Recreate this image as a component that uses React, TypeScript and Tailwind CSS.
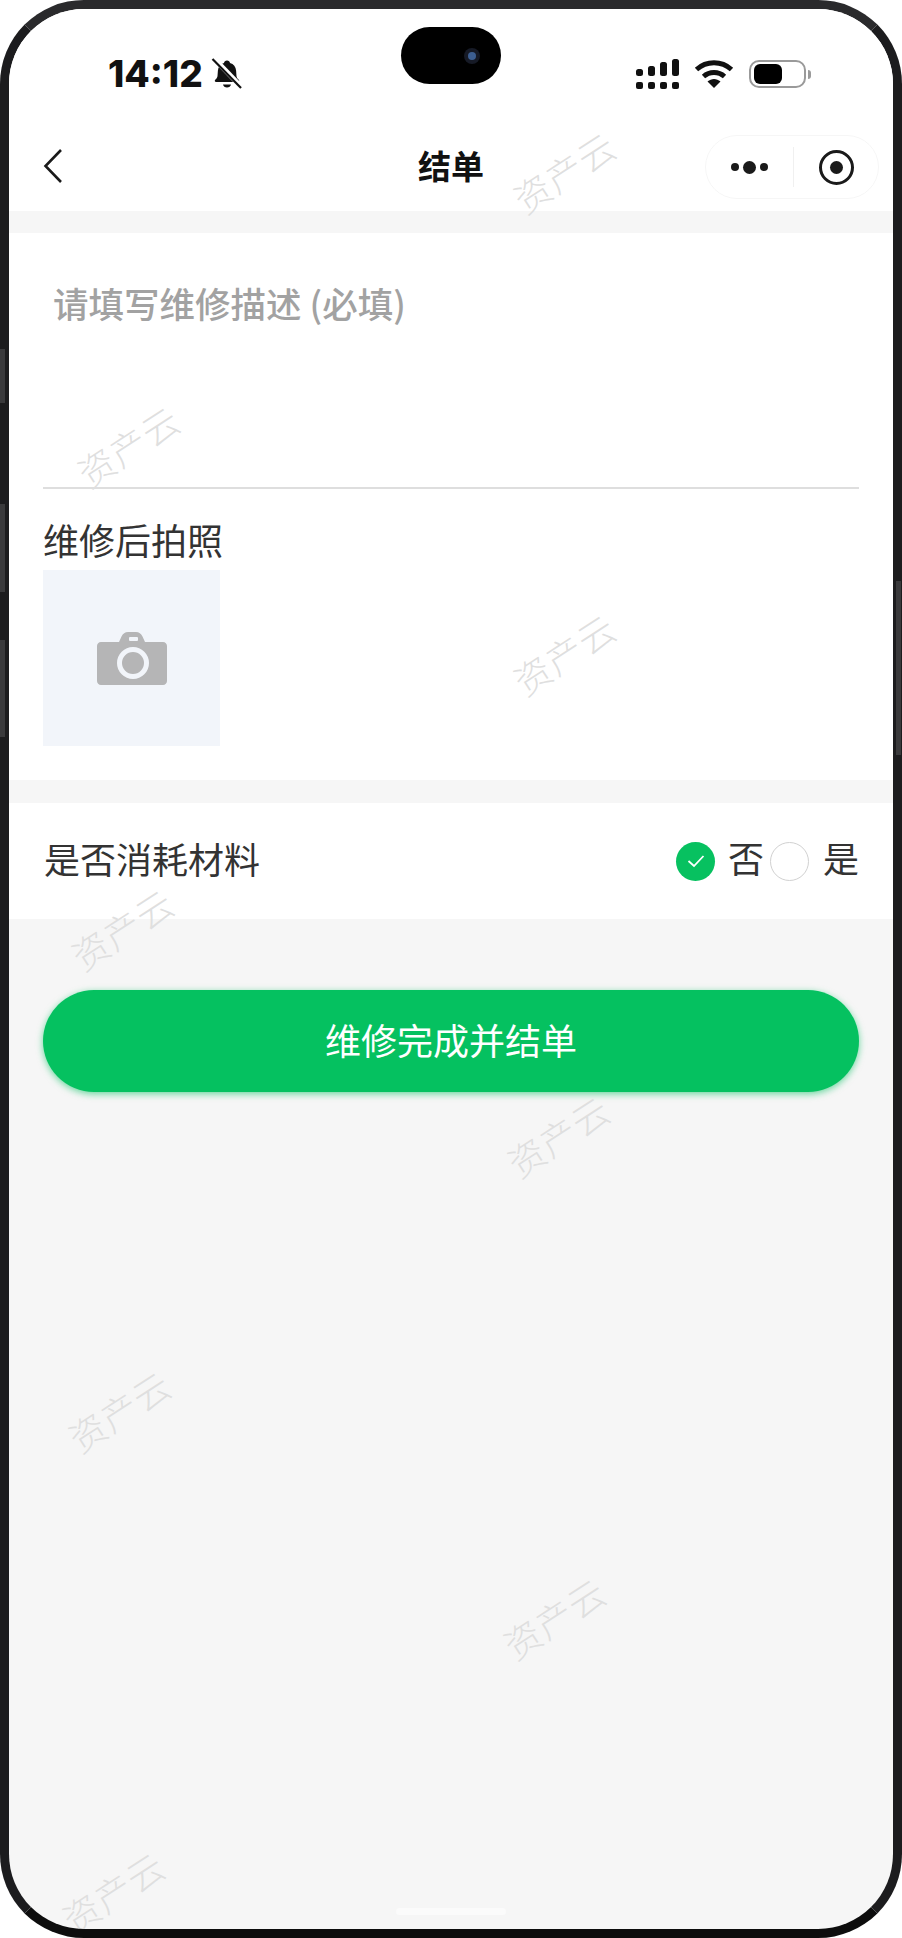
const CJK = "font-['PingFang_SC','Noto_Sans_CJK_SC','Noto_Sans',sans-serif]";

const WATERMARKS = [
  "left-[499px] top-[141px]",
  "left-[63px] top-[415px]",
  "left-[499px] top-[623px]",
  "left-[57px] top-[898px]",
  "left-[493px] top-[1105px]",
  "left-[54px] top-[1380px]",
  "left-[489px] top-[1587px]",
  "left-[48px] top-[1861px]",
];

function BellOff() {
  return (
    <svg width="32" height="32" viewBox="0 0 32 32" className="ml-[8px]">
      <path
        d="M16 2.500c1.700 0 2.800 1 3 2.400 3.700 1 5.800 4 6.100 7.600l.4 5.500c.1 1.600 1 2.700 2.300 3.800.8.800.4 2.200-.9 2.200H5.100c-1.300 0-1.700-1.400-.9-2.200 1.300-1.100 2.200-2.200 2.300-3.800l.4-5.500c.3-3.600 2.400-6.600 6.100-7.600.2-1.400 1.300-2.400 3-2.400z"
        fill="#111"
      />
      <path d="M12 26.500h8c-.4 1.800-2 3-4 3s-3.600-1.200-4-3z" fill="#111" />
      <path d="M3.500 1 30.500 29" stroke="#fff" strokeWidth="5" />
      <path d="M1.500 1 30 30" stroke="#111" strokeWidth="2.200" />
    </svg>
  );
}

function Signal() {
  return (
    <svg width="46" height="32" viewBox="0 0 46 32">
      <rect x="1" y="11" width="7" height="7" rx="2.500" fill="#111" />
      <rect x="13" y="8" width="7" height="10" rx="2.500" fill="#111" />
      <rect x="25" y="4" width="7" height="14" rx="2.500" fill="#111" />
      <rect x="37" y="1" width="7" height="17" rx="2.500" fill="#111" />
      <rect x="1" y="24" width="7" height="7" rx="2" fill="#111" />
      <rect x="13" y="24" width="7" height="7" rx="2" fill="#111" />
      <rect x="25" y="24" width="7" height="7" rx="2" fill="#111" />
      <rect x="37" y="24" width="7" height="7" rx="2" fill="#111" />
    </svg>
  );
}

function Wifi() {
  return (
    <svg width="40" height="30" viewBox="0 0 40 30">
      <path d="M2.500 10.500C12.500 1.500 27.500 1.500 37.500 10.500" fill="none" stroke="#111" strokeWidth="5" />
      <path d="M9.500 17.500C15.500 12.200 24.500 12.200 30.500 17.500" fill="none" stroke="#111" strokeWidth="5" />
      <path d="M13.500 22.500C17.500 19 22.500 19 26.500 22.500L20 29z" fill="#111" />
    </svg>
  );
}

function Battery() {
  return (
    <div className="ml-[15px] flex items-center">
      <div className="flex h-[28px] w-[57px] items-center rounded-[10px] border-2 border-[#9a9a9a] px-[3px]">
        <div className="h-[20px] w-[28px] rounded-[6px] bg-black" />
      </div>
      <div className="ml-[2px] h-[9px] w-[3px] rounded-r-full bg-[#9a9a9a]" />
    </div>
  );
}

function Camera() {
  return (
    <svg width="70" height="53" viewBox="0 0 70 53">
      <path
        d="M4 10h18l2.500-5.500C26 1.500 28 0 31 0h8c3 0 5 1.500 6.500 4.500L48 10h18c2.300 0 4 1.700 4 4v35c0 2.300-1.700 4-4 4H4c-2.300 0-4-1.700-4-4V14c0-2.300 1.700-4 4-4z"
        fill="#b5b5b6"
      />
      <rect x="32" y="5" width="9" height="4" rx="1" fill="#f2f5fa" />
      <circle cx="36" cy="31" r="13.500" fill="none" stroke="#f2f5fa" strokeWidth="5" />
    </svg>
  );
}

export default function App() {
  return (
    <div className={`relative h-[1938px] w-[902px] overflow-hidden bg-white ${CJK}`}>
      {/* side buttons */}
      <div className="absolute left-0 top-[349px] z-20 h-[54px] w-[5px] bg-[#3a3a3c]" />
      <div className="absolute left-0 top-[504px] z-20 h-[88px] w-[5px] bg-[#3a3a3c]" />
      <div className="absolute left-0 top-[640px] z-20 h-[97px] w-[5px] bg-[#3a3a3c]" />
      <div className="absolute left-[896px] top-[581px] z-20 h-[174px] w-[5px] bg-[#3a3a3c]" />

      <div className="relative h-full overflow-hidden rounded-[84px] border-[9px] border-[#1c1c1e] border-t-[#2a2a2c] border-b-[#0d0d0d] bg-[#f6f6f6]">
        {/* header */}
        <div className="h-[202px] bg-white">
          <div className="relative flex h-[103px] items-start">
            <div className="ml-[99px] mt-[45px] flex items-center">
              <span className="font-['Inter',sans-serif] text-[37px] font-extrabold leading-[40px] text-[#111]">14:12</span>
              <BellOff />
            </div>
            <div className="absolute left-[392px] top-[18px] flex h-[57px] w-[100px] items-center justify-end rounded-full bg-black pr-[21px]">
              <div className="flex h-[16px] w-[16px] items-center justify-center rounded-full bg-[#161a26]">
                <div className="h-[8px] w-[8px] rounded-full bg-[#3d5f92]" />
              </div>
            </div>
            <div className="ml-auto mr-[82px] mt-[49px] flex items-center">
              <Signal />
              <div className="ml-[13px]">
                <Wifi />
              </div>
              <Battery />
            </div>
          </div>

          <div className="relative flex h-[99px] items-start">
            <svg width="20" height="36" viewBox="0 0 20 36" className="ml-[34px] mt-[36px]">
              <path d="M18 2 2.500 18 18 34" fill="none" stroke="#1a1a1a" strokeWidth="2.600" />
            </svg>
            <span className="absolute left-[409px] top-[31px] w-[66px] whitespace-nowrap text-center text-[33px] font-bold leading-[44px] text-[#111]">
              结单
            </span>
            <div className="ml-auto mr-[14px] mt-[23px] flex h-[64px] w-[174px] items-center rounded-full border border-[#f6f6f6]">
              <div className="ml-[25px] flex items-center gap-[4px]">
                <div className="h-[8px] w-[8px] rounded-full bg-[#1a1a1a]" />
                <div className="h-[13px] w-[13px] rounded-full bg-[#1a1a1a]" />
                <div className="h-[8px] w-[8px] rounded-full bg-[#1a1a1a]" />
              </div>
              <div className="ml-[25px] h-[40px] w-px bg-[#f0f0f0]" />
              <div className="ml-[25px] flex h-[35px] w-[35px] items-center justify-center rounded-full border-[3.5px] border-[#1a1a1a]">
                <div className="h-[13px] w-[13px] rounded-full bg-[#1a1a1a]" />
              </div>
            </div>
          </div>
        </div>

        {/* repair description + photo */}
        <div className="mt-[22px] bg-white px-[34px] pb-[34px]">
          <div className="h-[256px] border-b-2 border-[#dedede] pl-[10px] pt-[48px]">
            <span className="text-[35.500px] font-medium leading-[44px] text-[#a2a2a2]">请填写维修描述 (必填)</span>
          </div>
          <div className="mt-[27px] text-[36px] leading-[46px] text-[#333]">维修后拍照</div>
          <div className="mt-[8px] flex h-[176px] w-[177px] items-center justify-center bg-[#f2f5fa]">
            <Camera />
          </div>
        </div>

        {/* material option */}
        <div className="mt-[23px] flex h-[116px] items-center justify-between bg-white pl-[35px] pr-[37px] text-[36px] leading-[46px] text-[#333]">
          <span className="relative -top-[3px]">是否消耗材料</span>
          <div className="flex items-center">
            <div className="flex h-[39px] w-[39px] items-center justify-center rounded-full bg-[#07c160]">
              <svg width="20" height="16" viewBox="0 0 20 16">
                <path d="M2.500 8 8 13 17.500 3" fill="none" stroke="#fff" strokeWidth="1.800" />
              </svg>
            </div>
            <span className="relative -top-[4px] ml-[13px] w-[36px]">否</span>
            <div className="ml-[6px] h-[39px] w-[39px] rounded-full border-[1.500px] border-[#d1d1d1]" />
            <span className="relative -top-[4px] ml-[14px] w-[33px]">是</span>
          </div>
        </div>

        <div className="mx-[34px] mt-[71px] flex h-[102px] items-center justify-center rounded-full bg-[#05c160] text-[36px] text-white shadow-[0_2px_7px_rgba(7,193,96,0.6)]">
          <span className="relative -top-[2px]">维修完成并结单</span>
        </div>

        <div className="absolute bottom-[14px] left-[387px] h-[7px] w-[110px] rounded-full bg-[#fbfbfb]" />

        {/* watermarks */}
        {WATERMARKS.map((pos) => (
          <span
            key={pos}
            className={`pointer-events-none absolute ${pos} -rotate-[33deg] whitespace-nowrap text-[36.500px] font-light leading-[44px] tracking-[1px] text-[#dfdfdf]`}
          >
            资产云
          </span>
        ))}
      </div>
    </div>
  );
}
